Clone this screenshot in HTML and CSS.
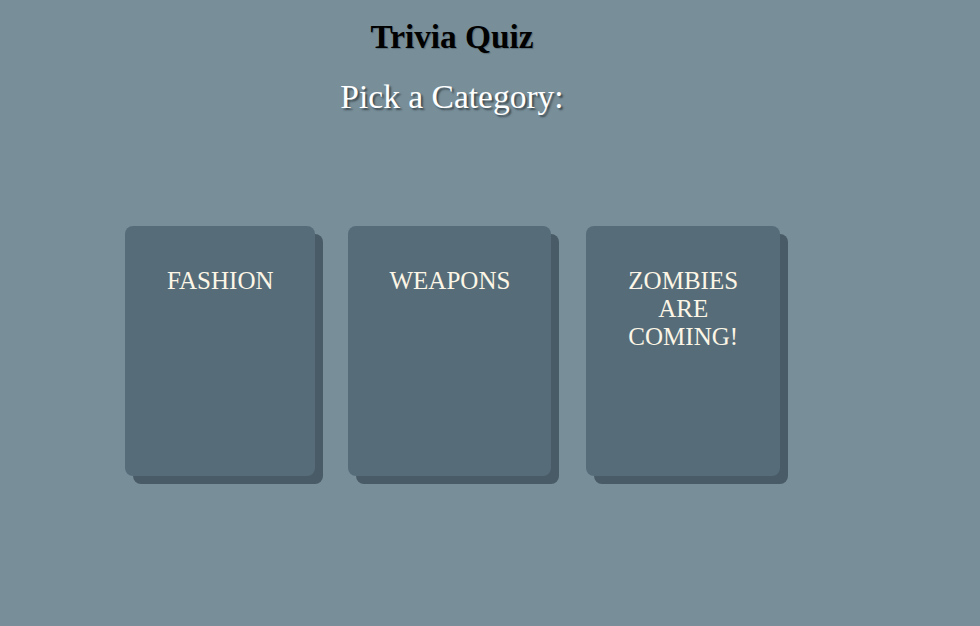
FILE: index.html
```html
<!DOCTYPE html>
<html>
<head>
<meta charset="utf-8">
<link rel="stylesheet" href="styles.css">
</head>
<body>
<div class="header">
  <h1 class="title">Trivia Quiz</h1>
  <h2 class="subtitle">Pick a Category:</h2>
</div>
<div class="cards">
  <div class="card">FASHION</div>
  <div class="card card-wide">WEAPONS</div>
  <div class="card">ZOMBIES<br>ARE<br>COMING!</div>
</div>
</body>
</html>
```
FILE: styles.css
```css
html, body {
  background: #788f9a;
}
body {
  margin: 8px;
  font-family: "Liberation Serif", "Times New Roman", serif;
}
.header {
  width: 888px;
  text-align: center;
  padding-top: 11px;
}
.title {
  margin: 0;
  font-size: 33.3px;
  font-weight: bold;
  line-height: 36px;
  color: #000;
  text-shadow: 1px 1px 1px #5a6e78;
}
.subtitle {
  margin: 24px 0 0 0;
  font-size: 33.5px;
  font-weight: normal;
  line-height: 36px;
  color: #fff;
  text-shadow: 2px 2px 2px #3e4a50;
}
.cards {
  display: flex;
  align-items: flex-start;
  padding-left: 117px;
  margin-top: 111px;
  padding-bottom: 40px;
}
.card {
  box-sizing: border-box;
  height: 250px;
  padding: 41px 42px 0 42px;
  margin-right: 33px;
  background: #566d79;
  border-radius: 8px;
  box-shadow: 8px 8px 0 #485b66;
  color: #fdf6e6;
  font-size: 25px;
  line-height: 28px;
  text-align: center;
}
.card:first-child {
  padding-right: 41px;
}
.card-wide {
  padding-right: 41px;
  margin-right: 35px;
}
```
